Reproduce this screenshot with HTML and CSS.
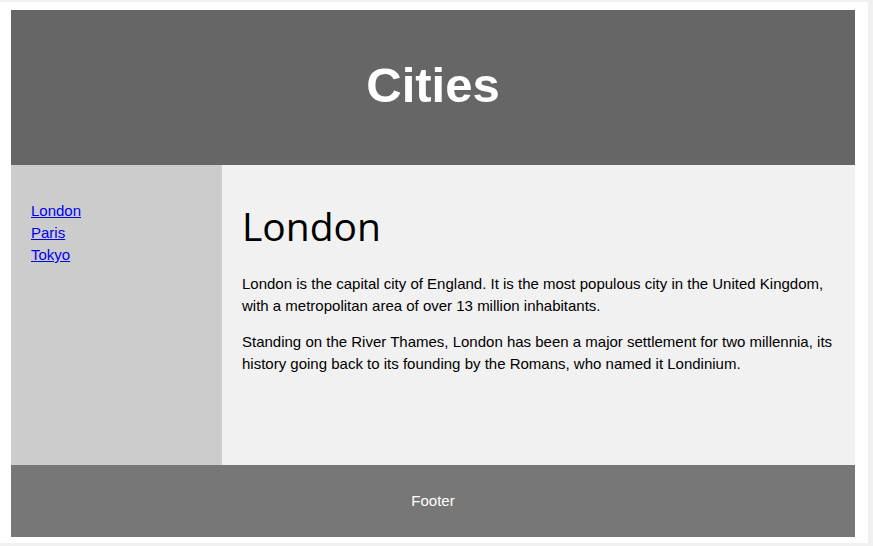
FILE: index.html
```html
<!DOCTYPE html>
<html>
<head>
<meta charset="utf-8">
<title>Cities</title>
<link rel="stylesheet" href="styles.css">
</head>
<body>
<div class="frame">
  <header class="top">
    <h2 class="title">Cities</h2>
  </header>
  <section class="middle">
    <nav class="side">
      <ul class="links">
        <li><a href="#">London</a></li>
        <li><a href="#">Paris</a></li>
        <li><a href="#">Tokyo</a></li>
      </ul>
    </nav>
    <article class="content">
      <h1 class="city">London</h1>
      <p class="para">London is the capital city of England. It is the most populous city in the United Kingdom, with a metropolitan area of over 13 million inhabitants.</p>
      <p class="para">Standing on the River Thames, London has been a major settlement for two millennia, its history going back to its founding by the Romans, who named it Londinium.</p>
    </article>
  </section>
  <footer class="bottom">
    <p class="foot">Footer</p>
  </footer>
</div>
</body>
</html>
```
FILE: styles.css
```css
html, body {
  margin: 0;
  padding: 0;
  background: #f0f0f0;
  height: 546px;
  overflow: hidden;
}
.frame {
  box-sizing: border-box;
  margin-top: 2px;
  width: 868px;
  height: 541px;
  background: #fff;
  padding: 8px 13px 6px 11px;
  display: flex;
  flex-direction: column;
  font-family: "Liberation Sans", Arial, sans-serif;
  font-size: 15px;
}
.top {
  height: 155px;
  background: #666;
  color: #fff;
  display: flex;
  align-items: center;
  justify-content: center;
  padding-bottom: 5px;
  box-sizing: border-box;
}
.title {
  margin: 0;
  font-size: 49px;
  font-weight: bold;
}
.middle {
  height: 300px;
  display: flex;
}
.side {
  width: 211px;
  background: #ccc;
  padding: 35px 20px 0;
  box-sizing: border-box;
}
.links {
  list-style: none;
  margin: 0;
  padding: 0;
  line-height: 22px;
}
.links a {
  color: #0000ee;
}
.content {
  flex: 1;
  background: #f1f1f1;
  padding: 0 20px 0 20px;
}
.city {
  font-family: "Open Sans", sans-serif;
  font-weight: normal;
  font-size: 39px;
  margin: 34px 0 21px;
  line-height: 53px;
  color: #000;
}
.para {
  margin: 0 0 14px;
  line-height: 22px;
}
.bottom {
  height: 72px;
  background: #777;
  color: #fff;
  display: flex;
  align-items: center;
  justify-content: center;
  padding-bottom: 2px;
  box-sizing: border-box;
}
.foot {
  margin: 0;
}
```
